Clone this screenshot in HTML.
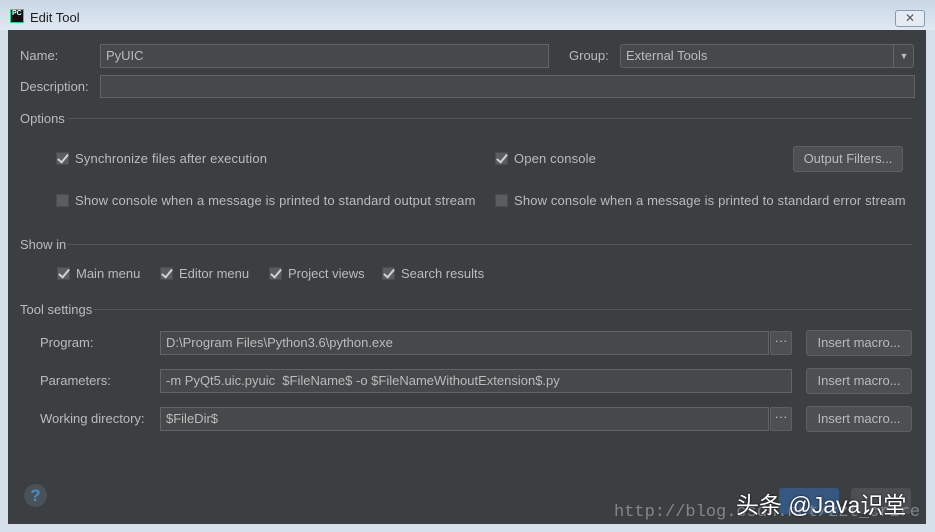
<!DOCTYPE html><html><head><style>
body{margin:0;width:935px;height:532px;background:#d6e0ea;position:relative;overflow:hidden;font-family:"Liberation Sans",sans-serif;font-size:13px;color:#bbbbbb}
.a{position:absolute;white-space:nowrap}
.f{position:absolute;background:#45494a;border:1px solid #646464;box-sizing:border-box;padding-left:5px;line-height:22px;color:#bbb}
.b{position:absolute;background:#4c5052;border:1px solid #5e6060;border-radius:3px;box-sizing:border-box;text-align:center;line-height:23px;color:#bbb}
.sep{position:absolute;height:1px;background:#515658}
.cb{position:absolute;width:13px;height:13px;background:#5a5d5f;border:1px solid #4a4d4f;box-sizing:border-box}
.cb.c::after{content:"";position:absolute;left:3px;top:-1px;width:4px;height:9px;border:solid #d0d0d0;border-width:0 2px 2px 0;transform:rotate(40deg)}
.ls{letter-spacing:.15px}
</style></head><body>
<div class="a" style="left:0;top:0;width:935px;height:30px;background:linear-gradient(#c9d7e6,#dfe8f1)"></div>
<div class="a" style="left:10px;top:9px;width:14px;height:14px;background:#111;border:1px solid #21d789;box-sizing:border-box;color:#fff;font-size:7px;font-weight:bold;line-height:8px;padding-left:1px">PC</div>
<div class="a" style="left:30px;top:10px;color:#1e1e1e;font-size:13px">Edit Tool</div>
<div class="a" style="left:895px;top:10px;width:28px;height:15px;border:1px solid #8a99ab;border-radius:3px;background:#e4ebf2;text-align:center;font-size:12px;line-height:14px;color:#555">✕</div>
<div class="a" style="left:8px;top:30px;width:918px;height:494px;background:#3c3f41"></div>
<div class="a" style="left:20px;top:48px">Name:</div>
<div class="f" style="left:100px;top:44px;width:449px;height:24px">PyUIC</div>
<div class="a" style="left:569px;top:48px">Group:</div>
<div class="f" style="left:620px;top:44px;width:294px;height:24px;border-radius:3px">External Tools</div>
<div class="a" style="left:893px;top:45px;width:20px;height:22px;border-left:1px solid #646464;text-align:center;font-size:9px;line-height:22px">▼</div>
<div class="a" style="left:20px;top:79px">Description:</div>
<div class="f" style="left:100px;top:75px;width:815px;height:23px"></div>
<div class="a" style="left:20px;top:111px">Options</div><div class="sep" style="left:68px;top:118px;width:844px"></div>
<div class="cb c" style="left:56px;top:152px"></div><div class="a ls" style="left:75px;top:151px">Synchronize files after execution</div>
<div class="cb c" style="left:495px;top:152px"></div><div class="a ls" style="left:514px;top:151px">Open console</div>
<div class="b" style="left:793px;top:146px;width:110px;height:26px;line-height:24px">Output Filters...</div>
<div class="cb" style="left:56px;top:194px"></div><div class="a ls" style="left:75px;top:193px">Show console when a message is printed to standard output stream</div>
<div class="cb" style="left:495px;top:194px"></div><div class="a ls" style="left:514px;top:193px">Show console when a message is printed to standard error stream</div>
<div class="a" style="left:20px;top:237px">Show in</div><div class="sep" style="left:68px;top:244px;width:844px"></div>
<div class="cb c" style="left:57px;top:267px"></div><div class="a" style="left:76px;top:266px">Main menu</div>
<div class="cb c" style="left:160px;top:267px"></div><div class="a" style="left:179px;top:266px">Editor menu</div>
<div class="cb c" style="left:269px;top:267px"></div><div class="a" style="left:288px;top:266px">Project views</div>
<div class="cb c" style="left:382px;top:267px"></div><div class="a" style="left:401px;top:266px">Search results</div>
<div class="a" style="left:20px;top:302px">Tool settings</div><div class="sep" style="left:93px;top:309px;width:819px"></div>
<div class="a" style="left:40px;top:335px">Program:</div>
<div class="f" style="left:160px;top:331px;width:609px;height:24px">D:\Program Files\Python3.6\python.exe</div>
<div class="b" style="left:770px;top:331px;width:22px;height:24px;line-height:18px;border-radius:2px">···</div>
<div class="b" style="left:806px;top:330px;width:106px;height:26px;line-height:24px">Insert macro...</div>
<div class="a" style="left:40px;top:373px">Parameters:</div>
<div class="f" style="left:160px;top:369px;width:632px;height:24px">-m PyQt5.uic.pyuic &nbsp;$FileName$ -o $FileNameWithoutExtension$.py</div>
<div class="b" style="left:806px;top:368px;width:106px;height:26px;line-height:24px">Insert macro...</div>
<div class="a" style="left:40px;top:411px">Working directory:</div>
<div class="f" style="left:160px;top:407px;width:609px;height:24px">$FileDir$</div>
<div class="b" style="left:770px;top:407px;width:22px;height:24px;line-height:18px;border-radius:2px">···</div>
<div class="b" style="left:806px;top:406px;width:106px;height:26px;line-height:24px">Insert macro...</div>
<div class="a" style="left:24px;top:484px;width:23px;height:23px;border-radius:50%;background:#4a5258;color:#3d8fd0;font-weight:bold;font-size:17px;text-align:center;line-height:23px">?</div>
<div class="a" style="left:779px;top:488px;width:60px;height:26px;background:#365880;border-radius:3px"></div>
<div class="a" style="left:851px;top:488px;width:60px;height:26px;background:#4c5052;border-radius:3px"></div>
<div class="a" style="left:614px;top:503px;font-family:'Liberation Mono',monospace;font-size:17px;color:#9a9ea3;opacity:.75">http://blog.csdn.net/zzt_crire</div>
<div class="a" style="left:736px;top:486px;font-family:'Liberation Sans','Noto Sans CJK SC',sans-serif;font-size:23px;color:#fff;text-shadow:0 0 2px #000">头条 @Java识堂</div>
</body></html>
